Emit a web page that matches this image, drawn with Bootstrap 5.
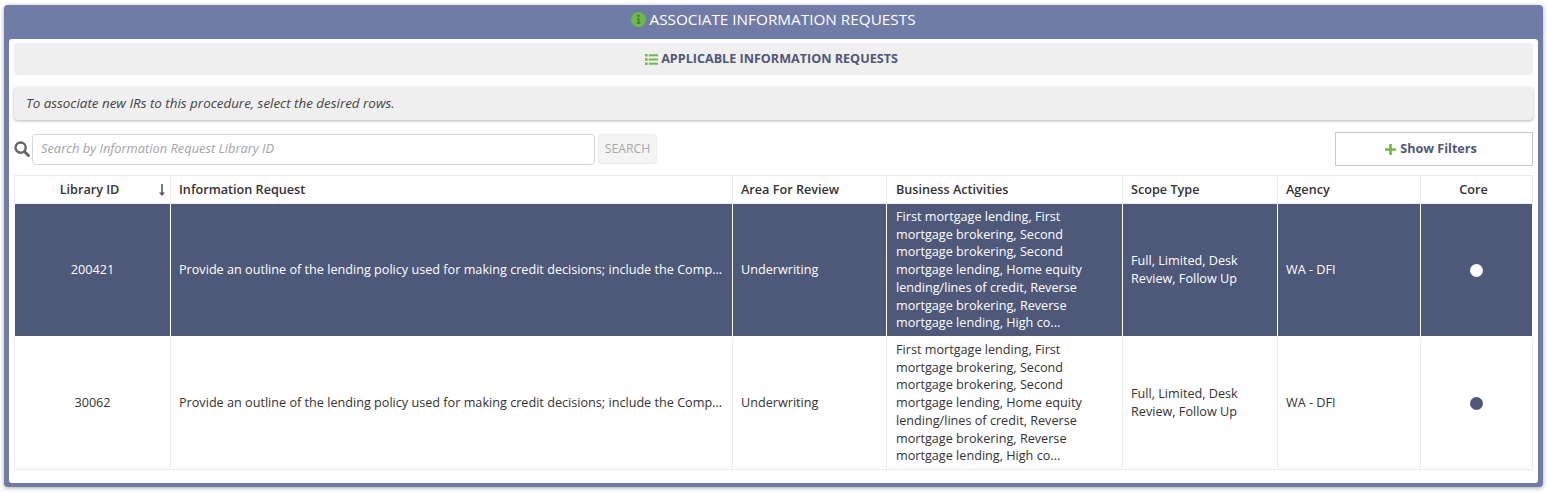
<!DOCTYPE html>
<html lang="en">
<head>
<meta charset="utf-8">
<title>Associate Information Requests</title>
<link rel="stylesheet" href="https://cdn.jsdelivr.net/npm/bootstrap@5.3.0/dist/css/bootstrap.min.css">
<style>
html,body{height:492px;overflow:hidden;background:#fff}
body{font-family:"Open Sans",sans-serif;font-size:12.65px;color:#333;padding:5px 6px 5px 4px}
.frame{background:#6f7ca6;border-radius:4px;padding:0 5px 4px;height:482px;box-shadow:0 1px 4px rgba(0,0,0,.35);display:flex;flex-direction:column}
.frame-head{height:34px;flex:none;padding-bottom:6px;color:#fff;font-size:15.3px;gap:3px}
.frame-body{background:#fff;border-radius:3px;padding:4px 5px 0;flex:1;min-height:0}
.sub-head{height:32px;background:#efefef;border-radius:4px;color:#4e5879;font-weight:700;font-size:12.6px;gap:3px;margin-bottom:12px;padding-right:4px}
.note{height:33px;background:#efefef;border-radius:4px;font-style:italic;padding:0 0 0 12px;box-shadow:0 1px 3px rgba(0,0,0,.3);font-size:13.4px;color:#444;margin-bottom:12px}
.search-row{height:34px;margin-bottom:9px}
.search-in{width:563px;height:31px;margin-left:2px;border:1px solid #d6d6d6;border-radius:4px;padding:0 8px 2px;font-size:12.85px;font-style:italic;font-family:inherit}
.search-in::placeholder{color:#a3a3a3;opacity:1}
.search-go{width:59px;height:30px;margin-left:3px;background:#f4f4f4;border:1px solid #ececec;border-radius:3px;color:#a8a8a8;font-size:12.2px;font-weight:400;padding:0}
.filter-btn{width:198px;height:34px;border:1px solid #c8c8c8;border-radius:0;background:#fff;color:#4e5879;font-weight:700;font-size:12.6px;padding:0 6px 0 0;gap:4px}
.req-table{table-layout:fixed;width:1518px;border-collapse:collapse;margin:0;font-size:12.65px;line-height:17.7px;color:#333}
.req-table th,.req-table td{border:1px solid #ebebeb;padding:0 8px;vertical-align:middle;background:transparent;box-shadow:none}
.req-table th{font-weight:600;height:28px;color:#333;position:relative}
.req-table th.id-head{padding-right:14px}
.req-table th.core-head{padding-right:14px}
.req-table .biz-cell{padding-left:9px}
.req-table tbody tr.row-a{height:133px}
.req-table tbody tr.row-b{height:133px}
.req-table tr.row-sel td{background:#4e5879;color:#fff;border-color:#fff}
.one-line{white-space:nowrap;overflow:hidden}
.sort-mark{position:absolute;right:4px;top:7px}
.dot-mark{display:inline-block;width:13px;height:13px;border-radius:50%;vertical-align:middle}
.dot-dark{background:#4e5879}
</style>
</head>
<body>
<div class="frame">
  <div class="frame-head d-flex align-items-center justify-content-center">
    <svg width="15" height="15" viewBox="0 0 15 15" aria-hidden="true"><circle cx="7.5" cy="7.5" r="7.4" fill="#6cbb45"/><circle cx="7.5" cy="4" r="1.4" fill="#4d7f38"/><path d="M5.8 6.200h2.800v4.600h1V12H5.600v-1.200h1V7.400h-.8z" fill="#4d7f38"/></svg>
    <span>ASSOCIATE INFORMATION REQUESTS</span>
  </div>
  <div class="frame-body">
    <div class="sub-head d-flex align-items-center justify-content-center">
      <svg width="13" height="11" viewBox="0 0 13 11" aria-hidden="true"><g fill="#6cbb45"><rect x="0" y="0" width="2.600" height="2.600"/><rect x="0" y="4.200" width="2.600" height="2.600"/><rect x="0" y="8.400" width="2.600" height="2.600"/><rect x="3.800" y=".3" width="9.200" height="2"/><rect x="3.800" y="4.500" width="9.200" height="2"/><rect x="3.800" y="8.700" width="9.200" height="2"/></g></svg>
      <span>APPLICABLE INFORMATION REQUESTS</span>
    </div>
    <div class="note d-flex align-items-center">To associate new IRs to this procedure, select the desired rows.</div>
    <div class="search-row d-flex align-items-center">
      <svg width="16" height="16" viewBox="0 0 16 16" aria-hidden="true"><circle cx="6.600" cy="6.600" r="5.100" fill="none" stroke="#666" stroke-width="2.400"/><path d="M10.600 10.800l3.800 3.800" stroke="#666" stroke-width="2.800" stroke-linecap="round"/></svg>
      <input class="search-in" type="text" placeholder="Search by Information Request Library ID">
      <button class="search-go" type="button" disabled>SEARCH</button>
      <button class="filter-btn btn d-flex align-items-center justify-content-center ms-auto" type="button">
        <svg width="11" height="11" viewBox="0 0 11 11" aria-hidden="true"><path d="M4.200 0h2.600v4.200H11v2.600H6.800V11H4.200V6.800H0V4.200h4.200z" fill="#6cbb45"/></svg>
        <span>Show Filters</span>
      </button>
    </div>
    <table class="table req-table">
      <colgroup><col style="width:156px"><col style="width:562px"><col style="width:154px"><col style="width:236px"><col style="width:155px"><col style="width:143px"><col style="width:112px"></colgroup>
      <thead>
        <tr>
          <th class="text-center id-head">Library ID<svg class="sort-mark" width="8" height="14" viewBox="0 0 8 14" aria-hidden="true"><path d="M3.200 1h1.600v8.500H7L4 13 1 9.500h2.200z" fill="#4e5879"/></svg></th>
          <th>Information Request</th>
          <th>Area For Review</th>
          <th class="biz-cell">Business Activities</th>
          <th>Scope Type</th>
          <th>Agency</th>
          <th class="text-center core-head">Core</th>
        </tr>
      </thead>
      <tbody>
        <tr class="row-a row-sel">
          <td class="text-center">200421</td>
          <td class="one-line">Provide an outline of the lending policy used for making credit decisions; include the Comp...</td>
          <td>Underwriting</td>
          <td class="biz-cell">First mortgage lending, First mortgage brokering, Second mortgage brokering, Second mortgage lending, Home equity lending/lines of credit, Reverse mortgage brokering, Reverse mortgage lending, High co...</td>
          <td>Full, Limited, Desk Review, Follow Up</td>
          <td>WA - DFI</td>
          <td class="text-center"><span class="dot-mark bg-white"></span></td>
        </tr>
        <tr class="row-b">
          <td class="text-center">30062</td>
          <td class="one-line">Provide an outline of the lending policy used for making credit decisions; include the Comp...</td>
          <td>Underwriting</td>
          <td class="biz-cell">First mortgage lending, First mortgage brokering, Second mortgage brokering, Second mortgage lending, Home equity lending/lines of credit, Reverse mortgage brokering, Reverse mortgage lending, High co...</td>
          <td>Full, Limited, Desk Review, Follow Up</td>
          <td>WA - DFI</td>
          <td class="text-center"><span class="dot-mark dot-dark"></span></td>
        </tr>
      </tbody>
    </table>
  </div>
</div>
<script src="https://cdn.jsdelivr.net/npm/bootstrap@5.3.0/dist/js/bootstrap.bundle.min.js"></script>
</body>
</html>
